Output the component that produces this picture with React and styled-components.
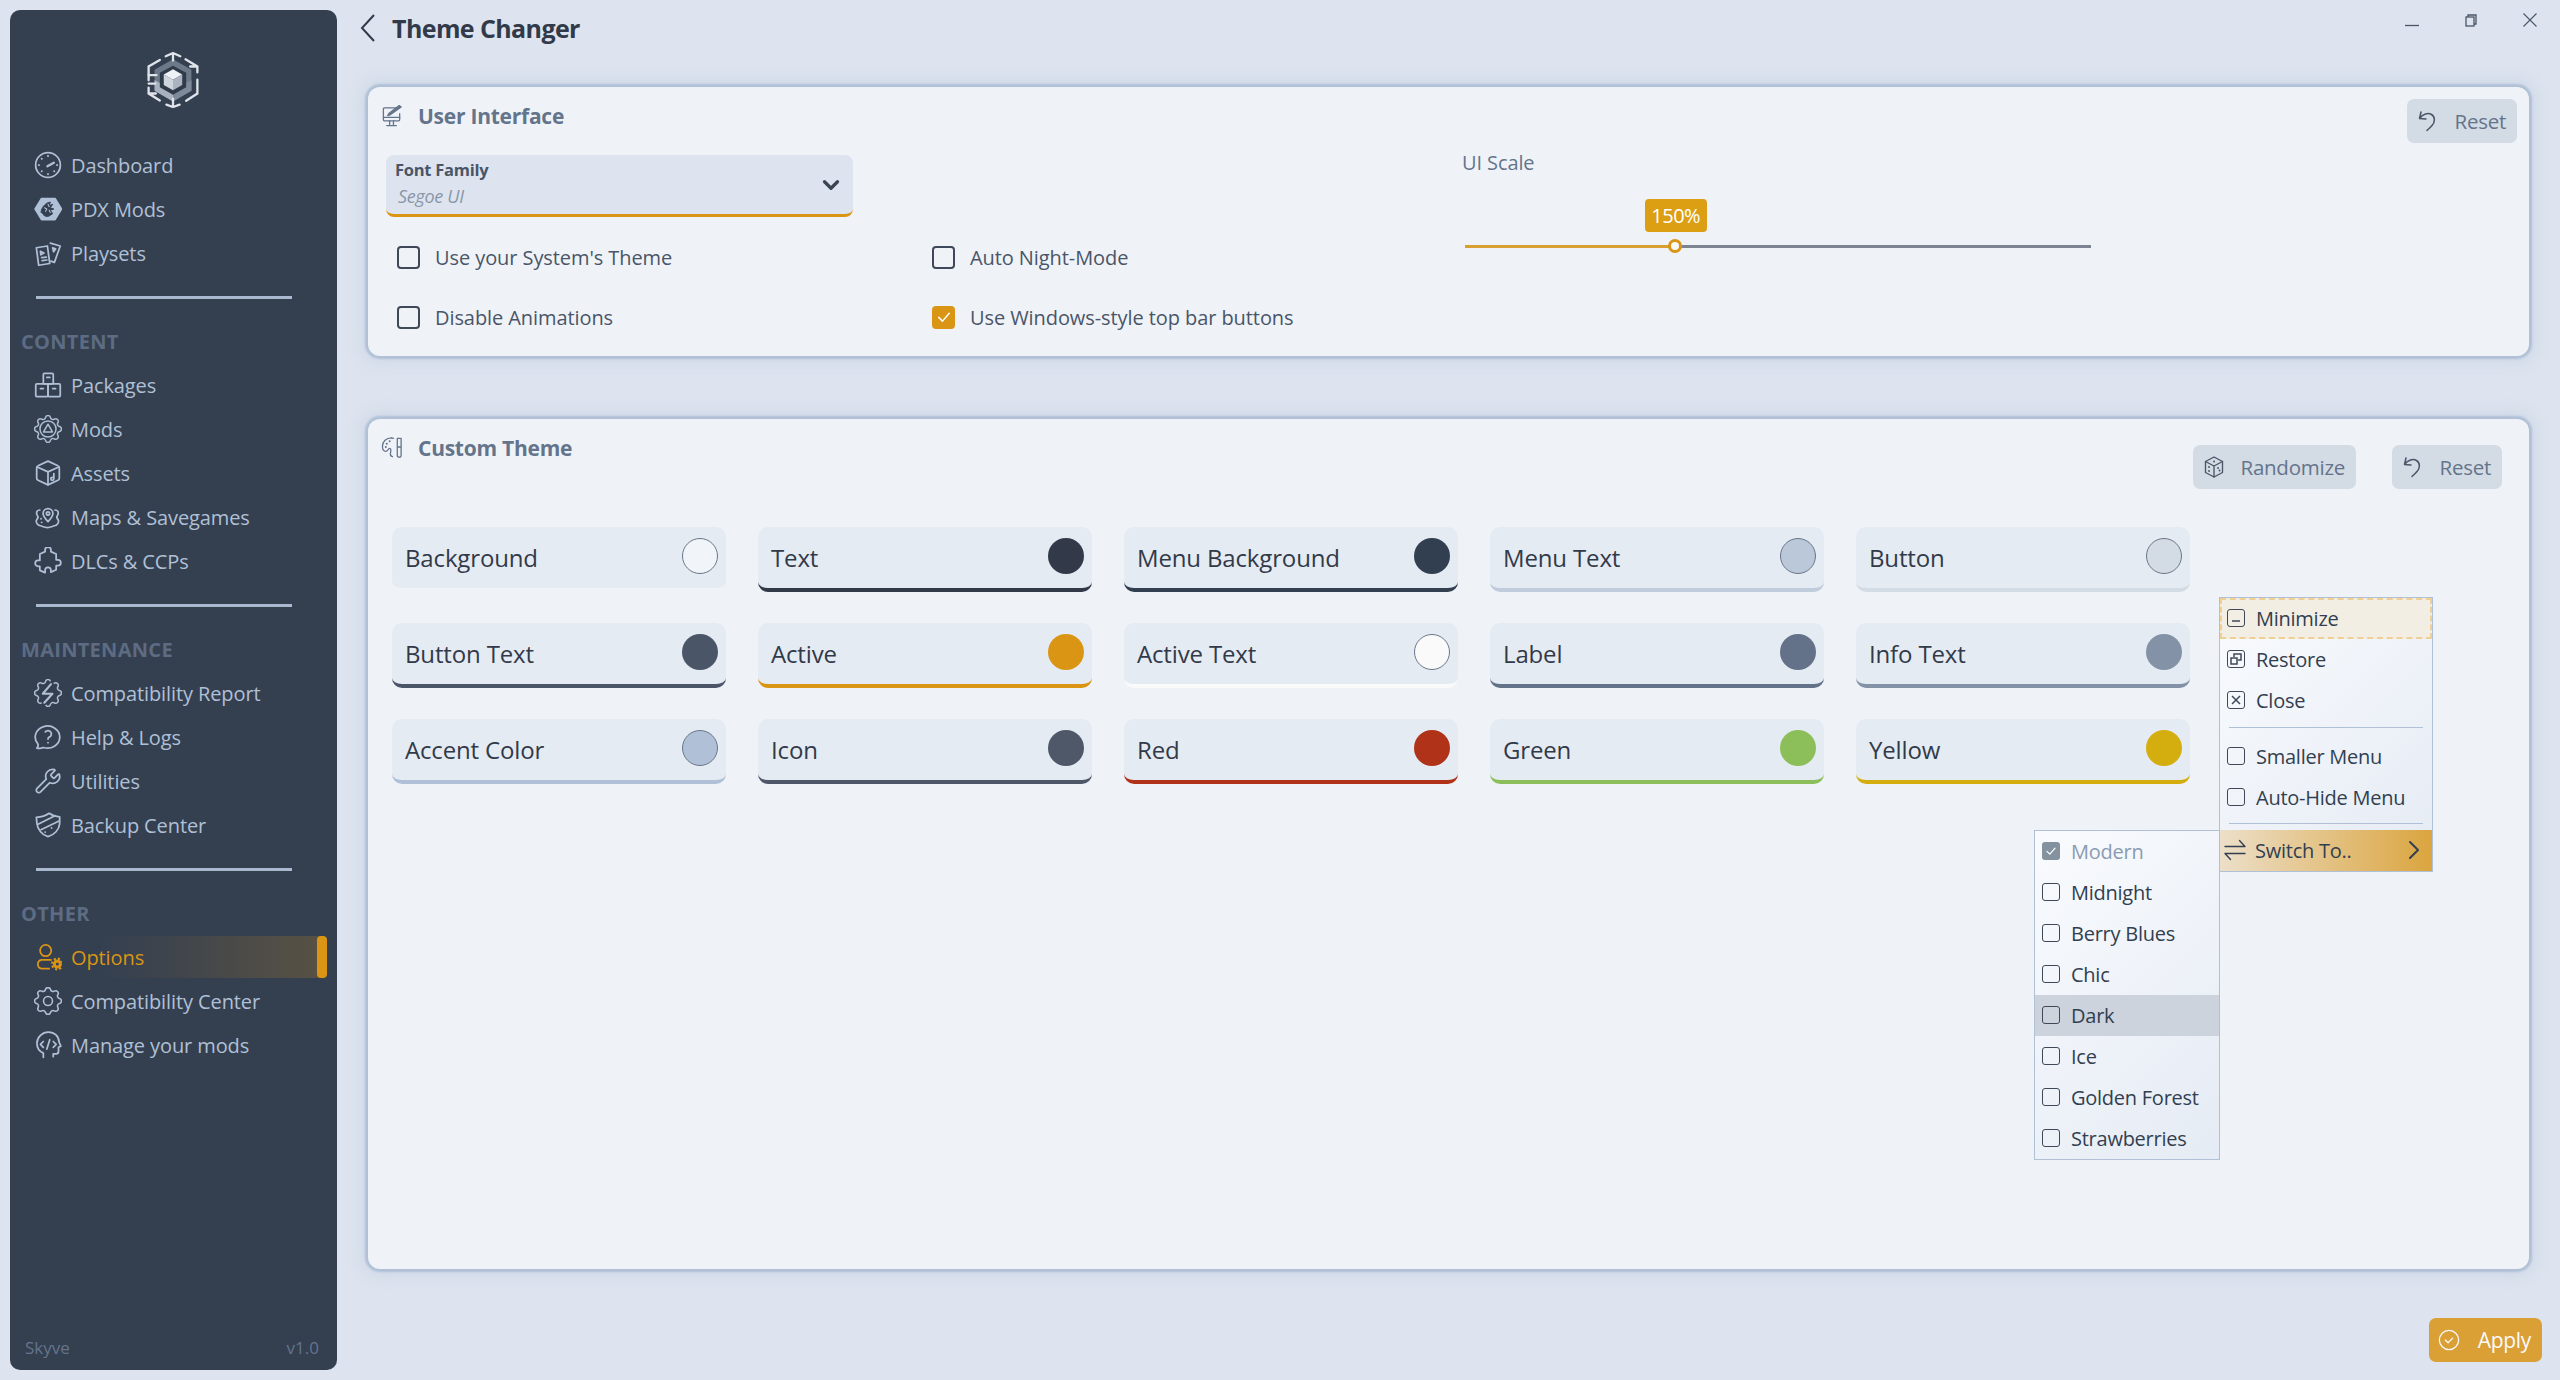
import React from 'react';
import styled, { createGlobalStyle } from 'styled-components';
import { ChevronDown, ChevronRight, Wrench } from 'lucide-react';

const FONT = '"Open Sans", "Noto Sans", sans-serif';

const GEAR =
  'M10.325 4.317c.426 -1.756 2.924 -1.756 3.35 0a1.724 1.724 0 0 0 2.573 1.066c1.543 -.94 3.31 .826 2.37 2.37a1.724 1.724 0 0 0 1.065 2.572c1.756 .426 1.756 2.924 0 3.35a1.724 1.724 0 0 0 -1.066 2.573c.94 1.543 -.826 3.31 -2.37 2.37a1.724 1.724 0 0 0 -2.572 1.065c-.426 1.756 -2.924 1.756 -3.35 0a1.724 1.724 0 0 0 -2.573 -1.066c-1.543 .94 -3.31 -.826 -2.37 -2.37a1.724 1.724 0 0 0 -1.065 -2.572c-1.756 -.426 -1.756 -2.924 0 -3.35a1.724 1.724 0 0 0 1.066 -2.573c-.94 -1.543 .826 -3.31 2.37 -2.37c1 .608 2.296 .07 2.572 -1.065z';

const GlobalStyle = createGlobalStyle`
  html, body { margin: 0; padding: 0; background: #dde4ef; }
  * { box-sizing: border-box; }
  body { font-family: ${FONT}; color: #323a49; }
`;

const Page = styled.div`
  position: relative;
  display: flex;
  width: 2560px;
  height: 1380px;
  overflow: hidden;
  background: #dde4ef;
`;

const Sidebar = styled.aside`
  display: flex;
  flex-direction: column;
  flex: none;
  width: 327px;
  height: 1360px;
  margin: 10px 0 10px 10px;
  padding-top: 42px;
  background: #343f50;
  border-radius: 10px;
  color: #b0c0d6;
`;

const LogoWrap = styled.div`
  display: flex;
  justify-content: center;
  height: 56px;
  margin-bottom: 35px;
  padding-right: 1px;
`;

const NavItem = styled.div`
  position: relative;
  display: flex;
  align-items: center;
  gap: 9px;
  height: 44px;
  padding-left: 24px;
  font-size: 20px;
  letter-spacing: -0.1px;
  color: ${p => (p.$active ? '#da9515' : '#b0c0d6')};
`;

const ActiveGlow = styled.span`
  position: absolute;
  left: 90px;
  top: 1px;
  width: 227px;
  height: 42px;
  border-radius: 0 6px 6px 0;
  background: linear-gradient(90deg, rgba(218, 149, 21, 0), rgba(218, 149, 21, 0.22));
  &::after {
    content: '';
    position: absolute;
    right: 0;
    top: 0;
    width: 10px;
    height: 42px;
    border-radius: 4px;
    background: #da9515;
  }
`;

const NavLabel = styled.span`
  position: relative;
`;

const Divider = styled.hr`
  flex: none;
  width: 256px;
  height: 3px;
  margin: 21px 0 21px 26px;
  border: 0;
  background: #a9b9cf;
`;

const SectionTitle = styled.div`
  height: 43px;
  padding: 0 0 0 11px;
  font-size: 20px;
  line-height: 43px;
  font-weight: 700;
  letter-spacing: 0.3px;
  color: #5d6c82;
`;

const SideFooter = styled.div`
  display: flex;
  justify-content: space-between;
  margin-top: auto;
  padding: 0 18px 11px 15px;
  font-size: 17px;
  color: #64748b;
`;

const Main = styled.main`
  display: flex;
  flex-direction: column;
  flex: 1;
  min-width: 0;
  padding: 0 18px 0 23px;
`;

const Header = styled.header`
  display: flex;
  justify-content: space-between;
  align-items: flex-start;
  height: 87px;
`;

const BackRow = styled.div`
  display: flex;
  align-items: center;
  gap: 17px;
  height: 55px;
`;

const PageTitle = styled.h1`
  margin: 0;
  font-size: 25px;
  font-weight: 700;
  letter-spacing: -0.6px;
  color: #323a49;
`;

const WindowControls = styled.div`
  display: flex;
  margin-right: -17px;
`;

const WinBtn = styled.div`
  display: flex;
  align-items: center;
  justify-content: center;
  width: 59px;
  height: 40px;
  color: #4a5568;
`;

const Card = styled.section`
  margin: 0 13px 0 8px;
  margin-top: ${p => p.$gap || 0}px;
  height: ${p => p.$height}px;
  padding: 7px 12px 0 13px;
  background: #eff3f8;
  border-radius: 12px;
  box-shadow: 0 0 2px 3px #b0c0d6, 0 0 16px 6px rgba(176, 192, 214, 0.35);
`;

const CardHead = styled.div`
  display: flex;
  justify-content: space-between;
  align-items: flex-start;
`;

const CardTitle = styled.div`
  display: flex;
  align-items: center;
  gap: 14px;
  height: ${p => p.$height || 44}px;
  font-size: 21px;
  font-weight: 700;
  letter-spacing: -0.25px;
  color: #64748b;
`;

const Actions = styled.div`
  display: flex;
  gap: 36px;
  margin-top: ${p => p.$top}px;
  margin-right: ${p => p.$right}px;
`;

const ActionButton = styled.div`
  display: flex;
  align-items: center;
  justify-content: space-between;
  width: ${p => p.$width}px;
  height: 44px;
  padding: 0 11px 0 9px;
  border-radius: 7px;
  background: #d3dbe4;
  font-size: 20.5px;
  letter-spacing: -0.25px;
  color: #64748b;
`;

const ButtonIcon = styled.span`
  display: flex;
  color: #4a5568;
`;

const Settings = styled.div`
  display: flex;
  margin-top: 12px;
  padding-left: 5px;
`;

const LeftColumn = styled.div`
  width: 1076px;
  flex: none;
`;

const Select = styled.div`
  position: relative;
  width: 467px;
  height: 62px;
  padding: 3px 0 0 9px;
  border-radius: 8px;
  background: #dde4ef;
  border-bottom: 3px solid #da9515;
`;

const SelectLabel = styled.div`
  font-size: 16.5px;
  line-height: 24px;
  font-weight: 700;
  letter-spacing: -0.25px;
  color: #4a5568;
`;

const SelectValue = styled.div`
  margin: 2px 0 0 3px;
  font-size: 18px;
  line-height: 24px;
  font-style: italic;
  letter-spacing: -0.3px;
  color: #8a97a8;
`;

const SelectArrow = styled.span`
  position: absolute;
  right: 9px;
  top: 17px;
  display: flex;
  color: #3a4453;
`;

const OptionGrid = styled.div`
  display: grid;
  grid-template-columns: 535px 535px;
  grid-auto-rows: 60px;
  margin-top: 10px;
  padding-left: 11px;
`;

const Option = styled.div`
  display: flex;
  align-items: center;
  gap: 15px;
  font-size: 20px;
  letter-spacing: -0.08px;
  color: #4a5568;
`;

const Check = styled.span`
  display: flex;
  align-items: center;
  justify-content: center;
  flex: none;
  width: 23px;
  height: 23px;
  border-radius: 4px;
  border: ${p => (p.$checked ? 'none' : '2.5px solid #3f4858')};
  background: ${p => (p.$checked ? '#da9515' : 'transparent')};
  color: #fff;
`;

const ScaleColumn = styled.div`
  display: flex;
  flex-direction: column;
  width: 629px;
`;

const ScaleLabel = styled.div`
  font-size: 20px;
  line-height: 16px;
  letter-spacing: -0.1px;
  color: #64748b;
`;

const Track = styled.div`
  position: relative;
  height: 3px;
  margin: 74px 0 0 3px;
  background: #7b8490;
`;

const TrackFill = styled.div`
  height: 3px;
  background: #da9f32;
`;

const Knob = styled.span`
  position: absolute;
  top: -6px;
  width: 14px;
  height: 14px;
  margin-left: -7px;
  border-radius: 50%;
  background: #fafafa;
  border: 3px solid #da9515;
`;

const Bubble = styled.span`
  position: absolute;
  top: -46px;
  width: 62px;
  height: 33px;
  margin-left: -30px;
  border-radius: 4px;
  background: #dc9f14;
  color: #fff;
  font-size: 20px;
  line-height: 33px;
  text-align: center;
  letter-spacing: -0.5px;
`;

const Swatches = styled.div`
  display: grid;
  grid-template-columns: repeat(5, 334px);
  grid-auto-rows: 65px;
  column-gap: 32px;
  row-gap: 31px;
  margin: 38px 0 0 11px;
`;

const Swatch = styled.div`
  display: flex;
  align-items: center;
  justify-content: space-between;
  padding: 0 8px 0 13px;
  background: #e5ebf3;
  border-radius: 10px;
  border-bottom: 4px solid ${p => p.$color};
  font-size: 24px;
  letter-spacing: -0.15px;
  color: #323a49;
`;

const Dot = styled.span`
  flex: none;
  width: 36px;
  height: 36px;
  margin-top: -4px;
  border-radius: 50%;
  background: ${p => p.$color};
  border: ${p => (p.$outlined ? '1px solid #6b7688' : 'none')};
`;

const FooterRow = styled.div`
  display: flex;
  justify-content: flex-end;
  margin-top: 49px;
`;

const ApplyButton = styled.div`
  display: flex;
  align-items: center;
  justify-content: space-between;
  width: 113px;
  height: 44px;
  padding: 0 11px 0 9px;
  border-radius: 7px;
  background: #da9f35;
  color: #fafafa;
  font-size: 21px;
  letter-spacing: -0.3px;
`;

const PopupMenu = styled.div`
  position: absolute;
  left: ${p => p.$left}px;
  top: ${p => p.$top}px;
  width: ${p => p.$width}px;
  background: linear-gradient(135deg, #f9fbfe, #e5ebf4);
  border: 1.5px solid #b0c0d6;
`;

const MenuRow = styled.div`
  position: relative;
  display: flex;
  align-items: center;
  gap: 11px;
  height: 41px;
  padding: 0 0 1px 7px;
  font-size: 20px;
  letter-spacing: -0.25px;
  color: ${p => (p.$muted ? '#8a9bb2' : '#323f50')};
  background: ${p => (p.$hover ? '#ccd3dc' : 'transparent')};
`;

const FocusRow = styled(MenuRow)`
  background: #f3eee3;
  border: 2px dashed #f0cf93;
  padding-left: 5px;
`;

const SwitchRow = styled(MenuRow)`
  justify-content: flex-start;
  padding-left: 3px;
  gap: 8px;
  background: linear-gradient(90deg, #ecdfc9, #dba53f);
`;

const SwitchArrow = styled.span`
  display: flex;
  margin-left: auto;
  margin-right: 2px;
`;

const MenuSep = styled.div`
  height: ${p => p.$size}px;
  padding: ${p => p.$pad}px 9px 0;
  &::before {
    content: '';
    display: block;
    height: 1px;
    background: #b0c0d6;
  }
`;

const Box = styled.span`
  display: flex;
  align-items: center;
  justify-content: center;
  flex: none;
  width: 18px;
  height: 18px;
  border-radius: 3px;
  border: ${p => (p.$checked ? 'none' : '1.6px solid #3f4858')};
  background: ${p => (p.$checked ? '#84919f' : 'transparent')};
  color: ${p => (p.$checked ? '#fff' : '#3f4858')};
`;

const Ico = styled.svg.attrs(p => ({
  viewBox: p.$box || '0 0 24 24',
  width: p.$size || 28,
  height: p.$size || 28,
}))`
  flex: none;
  position: relative;
  fill: none;
  stroke: currentColor;
  stroke-width: ${p => p.$stroke || 1.5};
  stroke-linecap: round;
  stroke-linejoin: round;
`;

const Logo = () => (
  <svg width="52" height="56" viewBox="0 0 156 170">
    <polygon points="78,22 134,54 134,118 78,150 22,118 22,54" fill="#6d7888" />
    <polygon points="22,85 22,118 78,150 78,118 50,100" fill="#a8b2bf" />
    <polygon points="134,85 134,118 78,150 78,118 106,100" fill="#7f8a99" />
    <polygon points="78,42 118,63 118,107 78,130 38,107 38,63" fill="#2f3a4a" />
    <polygon points="78,52 106,68 78,84 50,68" fill="#eef1f5" />
    <polygon points="50,68 78,84 78,116 50,100" fill="#cfd5dd" />
    <polygon points="106,68 78,84 78,116 106,100" fill="#aab3bf" />
    <g fill="none" stroke="#dfe4ea" strokeWidth="7" strokeLinecap="round">
      <path d="M56 13 L78 3 L100 13 M78 3 V26" />
      <path d="M116 22 L152 44 V62 M152 44 L130 44" />
      <path d="M152 84 V126 L118 148" />
      <path d="M98 160 L78 167 L58 160 M78 167 V142" />
      <path d="M38 147 L4 126 V108 M4 126 L26 126" />
      <path d="M4 86 V44 L38 24" />
      <path d="M4 70 H28 M4 96 H24" />
    </g>
  </svg>
);

const CROP = '2.6 2.6 18.8 18.8';

const cropped = { mods: true, report: true, gear: true };

const icons = {
  dashboard: (
    <>
      <circle cx="12" cy="12" r="10.6" />
      <path d="M11.5 13 L17 10" strokeWidth="2" />
      <path d="M12 4v.4M12 19.6v.4M4 12h.4M19.6 12h.4M6.5 6.5l.3.3M17.2 17.2l.3.3M6.5 17.5l.3-.3" />
    </>
  ),
  pdx: (
    <>
      <polygon points="6.5,3 18,3 23.5,12 18,21 6.5,21 1,12" fill="#b0c0d6" stroke="#b0c0d6" />
      <path d="M6 15c0-3 2-6 5-8l3-1-1 3 3-1-2 3 3 1-3 1 2 3-3 2c-2 1-4 0-5-1" fill="#343f50" stroke="#343f50" strokeWidth="0.8" />
      <path d="M9 11l2 1-1 2M12 8l1 2M13 13l1 2" stroke="#b0c0d6" strokeWidth="0.9" />
    </>
  ),
  playsets: (
    <>
      <path d="M2 7.5 L11.5 6 L13.5 21 L4 22.5 Z" />
      <path d="M14 3.5 L22.5 6 L17.5 20 L14.5 19" />
      <path d="M5.5 10.5l3 1.5-2.7 1.5zM6.6 16l4-.5M7 18.5l4-.5M16 7.5l2.5 1-1.7 2.5z" />
    </>
  ),
  packages: (
    <>
      <rect x="8" y="2" width="8.5" height="9" rx="1" />
      <rect x="1.5" y="11" width="10.5" height="11" rx="1" />
      <rect x="12" y="11" width="10.5" height="11" rx="1" />
      <path d="M11 5.5h2.5M5.5 15h2.5M16 15h2.5" />
    </>
  ),
  mods: (
    <g strokeWidth="1">
      <path d={GEAR} />
      <circle cx="12" cy="12" r="5.4" />
      <path d="M12 8.8l3 5.2h-6z" />
    </g>
  ),
  assets: (
    <>
      <path d="M12 1.8l8.5 4a2 2 0 0 1 1.2 1.8v8.8a2 2 0 0 1-1.2 1.8l-8.5 4-8.5-4a2 2 0 0 1-1.2-1.8V7.6a2 2 0 0 1 1.2-1.8z" />
      <path d="M2.8 6.8L12 11l9.2-4.2M12 11v11" />
      <path d="M17 12.5v4.5a1.3 1.3 0 1 1-1.3-1.3H17" />
    </>
  ),
  maps: (
    <>
      <path d="M12 16c-2.5-2.7-4.2-4.6-4.2-7a4.2 4.2 0 0 1 8.4 0c0 2.4-1.7 4.3-4.2 7z" />
      <circle cx="12" cy="9" r="1.4" />
      <path d="M5 6c-3 0-3.5 3-2 5 .8 1 .5 2-.5 3-1.5 2 0 5 3 5.5 2 .5 3 1.5 6 1.5s4-1 6-1.5c3-.5 4.5-3.5 3-5.5-1-1-1.3-2-.5-3 1.5-2 1-5-2-5" />
      <path d="M6.5 16.5h.1M6 13.5h.1" />
    </>
  ),
  dlc: (
    <path d="M9.5 2.5a2.5 2.5 0 0 1 5 0v1.5l4.5 2v5h1.5a2.5 2.5 0 0 1 0 5H19v3.500l-4.5 2v-1.5a2.5 2.5 0 0 0-5 0V22L5 20v-3.5H3.5a2.5 2.5 0 0 1 0-5H5V6l4.5-2z" />
  ),
  report: (
    <g strokeWidth="1">
      <path d={GEAR} />
      <path d="M14 6L8.5 12.5h6.5L9.5 18.5" stroke="#343f50" strokeWidth="3.5" />
      <path d="M14 6L8.5 12.5h6.5L9.5 18.5" strokeWidth="1.4" />
    </g>
  ),
  help: (
    <>
      <path d="M2.5 21.5c1.5-1.700 1.300-2.700.7-3.700A10.500 9.500 0 1 1 8 21c-1.500.8-3.500 1-5.500.5z" />
      <path d="M12 16.800v.1M12 13.800a1.700 1.700 0 0 1 1-1.700 2.900 2.900 0 1 0-3.300-4.500" />
    </>
  ),
  shield: (
    <>
      <path d="M12 22c-5-1.500-9-6-9.500-11.500L2 5.500c4.500-.3 8-1.400 11-3.500 2.500 1.800 5.500 2.800 9 3v6c-.5 5-4.500 9.500-10 11z" />
      <path d="M3 11.500L18 4M6 16L21.500 8.500" />
      <path d="M15 14.500h.1M9.500 18h.1" />
    </>
  ),
  options: (
    <>
      <circle cx="10" cy="6.500" r="4.800" />
      <path d="M14.500 14.500H6.500a3.800 3.800 0 0 0 0 7.500H13" />
      <circle cx="20" cy="18" r="3.300" fill="#da9515" stroke="#da9515" strokeWidth="1" />
      <circle cx="20" cy="18" r="4.600" stroke="#da9515" strokeWidth="1.800" strokeDasharray="1.800 1.800" strokeLinecap="butt" />
      <circle cx="20" cy="18" r="1.300" fill="#343f50" stroke="none" />
    </>
  ),
  gear: (
    <g strokeWidth="1.05">
      <path d={GEAR} />
      <circle cx="12" cy="12" r="3" />
    </g>
  ),
  manage: (
    <>
      <path d="M8 22.500v-3.500a9.500 9.500 0 0 1-5.500-8.500A9.800 9.800 0 0 1 12.500 1c5 0 8.800 3.500 9 8.500l1.500 3.500-2 1v3.500a2 2 0 0 1-2 2h-2.500v2.500" />
      <path d="M8 9l-2.500 2.500L8 14M16.500 9l2.500 2.500-2.500 2.500M13.500 7.500l-2.500 8" />
    </>
  ),
  monitor: (
    <>
      <path d="M16 3H3.500a1 1 0 0 0-1 1v11.500a1 1 0 0 0 1 1h15a1 1 0 0 0 1-1V9" />
      <path d="M2.500 13h17M9 16.500V21M13 16.500V21M6 21.500h10" />
      <path d="M7 11l3-1 11-8-2-1.500-10.500 8z" fill="currentColor" />
    </>
  ),
  palette: (
    <>
      <path d="M11 2C5.500 2 1.500 5.500 1.500 11c0 3 1.500 5 3.500 5 2.500 0 2-3 4-3 1.500 0 1.500 2 1 4-.5 2 0 4 2 4.500" />
      <path d="M13 2.500c-.8-.3-1.300-.5-2-.5" />
      <path d="M6 8h.1M9 5.500h.1M5 11.500h.1" strokeWidth="2" />
      <path d="M17 2.500h4v9h-4zM17 11.500h4v8.500a2 2 0 0 1-4 0z" />
    </>
  ),
  dice: (
    <>
      <path d="M12 2l8.500 4.500v11L12 22l-8.500-4.500v-11z" />
      <path d="M3.500 6.500L12 11l8.500-4.500M12 11v11" />
      <path d="M12 6.500h.1M7 12h.1M7 16h.1M16 13h.1M17.500 15.500h.1" strokeWidth="1.800" />
    </>
  ),
  reset: (
    <path d="M5 3L3.500 9.500 10 10M3.500 9.500C7 5 12 3.500 15.500 5.500c4 2.500 3.500 7.500.5 11-1.500 2-3.500 3.500-5 5" />
  ),
  swap: (
    <path d="M2 8.500h20M16.500 2.500l5.500 6M22 15.500H2l5.500 6" />
  ),
  apply: (
    <>
      <circle cx="12" cy="12" r="10.500" />
      <path d="M8 12l3 3 5-5" />
    </>
  ),
};

const Icon = ({ name, size, stroke }) => (
  <Ico $size={size} $stroke={stroke} $box={cropped[name] ? CROP : undefined}>{icons[name]}</Ico>
);

const SmallCheck = ({ size = 15, width = 2 }) => (
  <Ico $size={size} $stroke={width}><path d="M5 12.500l5 5L19 7" /></Ico>
);

const navGroups = [
  {
    items: [
      ['dashboard', 'Dashboard'],
      ['pdx', 'PDX Mods'],
      ['playsets', 'Playsets'],
    ],
  },
  {
    title: 'CONTENT',
    items: [
      ['packages', 'Packages'],
      ['mods', 'Mods'],
      ['assets', 'Assets'],
      ['maps', 'Maps & Savegames'],
      ['dlc', 'DLCs & CCPs'],
    ],
  },
  {
    title: 'MAINTENANCE',
    items: [
      ['report', 'Compatibility Report'],
      ['help', 'Help & Logs'],
      ['wrench', 'Utilities'],
      ['shield', 'Backup Center'],
    ],
  },
  {
    title: 'OTHER',
    items: [
      ['options', 'Options', true],
      ['gear', 'Compatibility Center'],
      ['manage', 'Manage your mods'],
    ],
  },
];

const swatches = [
  ['Background', '#f1f4f8', '#eff3f8', true],
  ['Text', '#323a49', '#323a49'],
  ['Menu Background', '#323f50', '#323f50'],
  ['Menu Text', '#bac8da', '#c0cbdb', true],
  ['Button', '#d3dbe4', '#d3dbe4', true],
  ['Button Text', '#4a5568', '#4a5568'],
  ['Active', '#da9515', '#da9515'],
  ['Active Text', '#fafafa', '#fafafa', true],
  ['Label', '#647289', '#647289'],
  ['Info Text', '#8392a6', '#8392a6'],
  ['Accent Color', '#b0c0d6', '#b0c0d6', true],
  ['Icon', '#4e5868', '#4e5868'],
  ['Red', '#b03319', '#b03319'],
  ['Green', '#8cbf59', '#8cbf59'],
  ['Yellow', '#d4ad0f', '#d4ad0f'],
];

const themes = ['Modern', 'Midnight', 'Berry Blues', 'Chic', 'Dark', 'Ice', 'Golden Forest', 'Strawberries'];

const scale = { value: 150, percent: 33.5 };

export default function App() {
  return (
    <Page>
      <GlobalStyle />
      <Sidebar>
        <LogoWrap><Logo /></LogoWrap>
        {navGroups.map((group, i) => (
          <React.Fragment key={i}>
            {i > 0 && <Divider />}
            {group.title && <SectionTitle>{group.title}</SectionTitle>}
            {group.items.map(([icon, label, active]) => (
              <NavItem key={label} $active={active}>
                {active && <ActiveGlow />}
                {icon === 'wrench' ? <Wrench size={28} strokeWidth={1.5} /> : <Icon name={icon} />}
                <NavLabel>{label}</NavLabel>
              </NavItem>
            ))}
          </React.Fragment>
        ))}
        <SideFooter>
          <span>Skyve</span>
          <span>v1.0</span>
        </SideFooter>
      </Sidebar>

      <Main>
        <Header>
          <BackRow>
            <svg width="15" height="28" viewBox="0 0 15 28" fill="none" stroke="#323a49" strokeWidth="2">
              <polyline points="14,1 2,14 14,27" />
            </svg>
            <PageTitle>Theme Changer</PageTitle>
          </BackRow>
          <WindowControls>
            <WinBtn>
              <svg width="14" height="14" viewBox="0 0 14 14" fill="none" stroke="currentColor" strokeWidth="1.3">
                <path d="M0 12.500h14" />
              </svg>
            </WinBtn>
            <WinBtn>
              <svg width="12" height="13" viewBox="0 0 12 13" fill="none" stroke="currentColor" strokeWidth="1.3">
                <rect x="1" y="3" width="8" height="9" />
                <path d="M3 3V1h8v9H9" />
              </svg>
            </WinBtn>
            <WinBtn>
              <svg width="14" height="14" viewBox="0 0 14 14" fill="none" stroke="currentColor" strokeWidth="1.1">
                <path d="M0.500 0.500l13 13M13.500 0.500l-13 13" />
              </svg>
            </WinBtn>
          </WindowControls>
        </Header>

        <Card $height={269}>
          <CardHead>
            <CardTitle>
              <Icon name="monitor" size={23} stroke={1.35} />
              User Interface
            </CardTitle>
            <Actions $top={5} $right={0}>
              <ActionButton $width={110}>
                <ButtonIcon><Icon name="reset" size={24} /></ButtonIcon>
                Reset
              </ActionButton>
            </Actions>
          </CardHead>
          <Settings>
            <LeftColumn>
              <Select>
                <SelectLabel>Font Family</SelectLabel>
                <SelectValue>Segoe UI</SelectValue>
                <SelectArrow><ChevronDown size={26} strokeWidth={3} /></SelectArrow>
              </Select>
              <OptionGrid>
                <Option><Check />Use your System's Theme</Option>
                <Option><Check />Auto Night-Mode</Option>
                <Option><Check />Disable Animations</Option>
                <Option><Check $checked><SmallCheck size={18} /></Check>Use Windows-style top bar buttons</Option>
              </OptionGrid>
            </LeftColumn>
            <ScaleColumn>
              <ScaleLabel>UI Scale</ScaleLabel>
              <Track>
                <TrackFill style={{ width: `${scale.percent}%` }} />
                <Bubble style={{ left: `${scale.percent}%` }}>{scale.value}%</Bubble>
                <Knob style={{ left: `${scale.percent}%` }} />
              </Track>
            </ScaleColumn>
          </Settings>
        </Card>

        <Card $height={850} $gap={63}>
          <CardHead>
            <CardTitle $height={43}>
              <Icon name="palette" size={23} stroke={1.35} />
              Custom Theme
            </CardTitle>
            <Actions $top={19} $right={15}>
              <ActionButton $width={163}>
                <ButtonIcon><Icon name="dice" size={24} stroke={1.35} /></ButtonIcon>
                Randomize
              </ActionButton>
              <ActionButton $width={110}>
                <ButtonIcon><Icon name="reset" size={24} /></ButtonIcon>
                Reset
              </ActionButton>
            </Actions>
          </CardHead>
          <Swatches>
            {swatches.map(([label, color, bar, outlined]) => (
              <Swatch key={label} $color={bar}>
                {label}
                <Dot $color={color} $outlined={outlined} />
              </Swatch>
            ))}
          </Swatches>
        </Card>

        <FooterRow>
          <ApplyButton>
            <Icon name="apply" size={22} stroke={1.35} />
            Apply
          </ApplyButton>
        </FooterRow>
      </Main>

      <PopupMenu $left={2219} $top={597} $width={214}>
        <FocusRow>
          <Box><svg width="10" height="10" viewBox="0 0 10 10" stroke="currentColor" strokeWidth="1.5"><path d="M1 8h8" /></svg></Box>
          Minimize
        </FocusRow>
        <MenuRow>
          <Box>
            <svg width="12" height="12" viewBox="0 0 12 12" fill="none" stroke="currentColor" strokeWidth="1.5">
              <rect x="1" y="5" width="6" height="6" />
              <path d="M4 4V1h7v6H8" />
            </svg>
          </Box>
          Restore
        </MenuRow>
        <MenuRow>
          <Box>
            <svg width="10" height="10" viewBox="0 0 10 10" stroke="currentColor" strokeWidth="1.5"><path d="M1 1l8 8M9 1l-8 8" /></svg>
          </Box>
          Close
        </MenuRow>
        <MenuSep $size={15} $pad={6} />
        <MenuRow><Box />Smaller Menu</MenuRow>
        <MenuRow><Box />Auto-Hide Menu</MenuRow>
        <MenuSep $size={12} $pad={5} />
        <SwitchRow>
          <Icon name="swap" size={24} stroke={1.35} />
          Switch To..
          <SwitchArrow><ChevronRight size={32} strokeWidth={1.5} /></SwitchArrow>
        </SwitchRow>
      </PopupMenu>

      <PopupMenu $left={2034} $top={830} $width={186}>
        {themes.map((name, i) => (
          <MenuRow key={name} $muted={i === 0} $hover={name === 'Dark'}>
            <Box $checked={i === 0}>{i === 0 && <SmallCheck size={14} width={2} />}</Box>
            {name}
          </MenuRow>
        ))}
      </PopupMenu>
    </Page>
  );
}
